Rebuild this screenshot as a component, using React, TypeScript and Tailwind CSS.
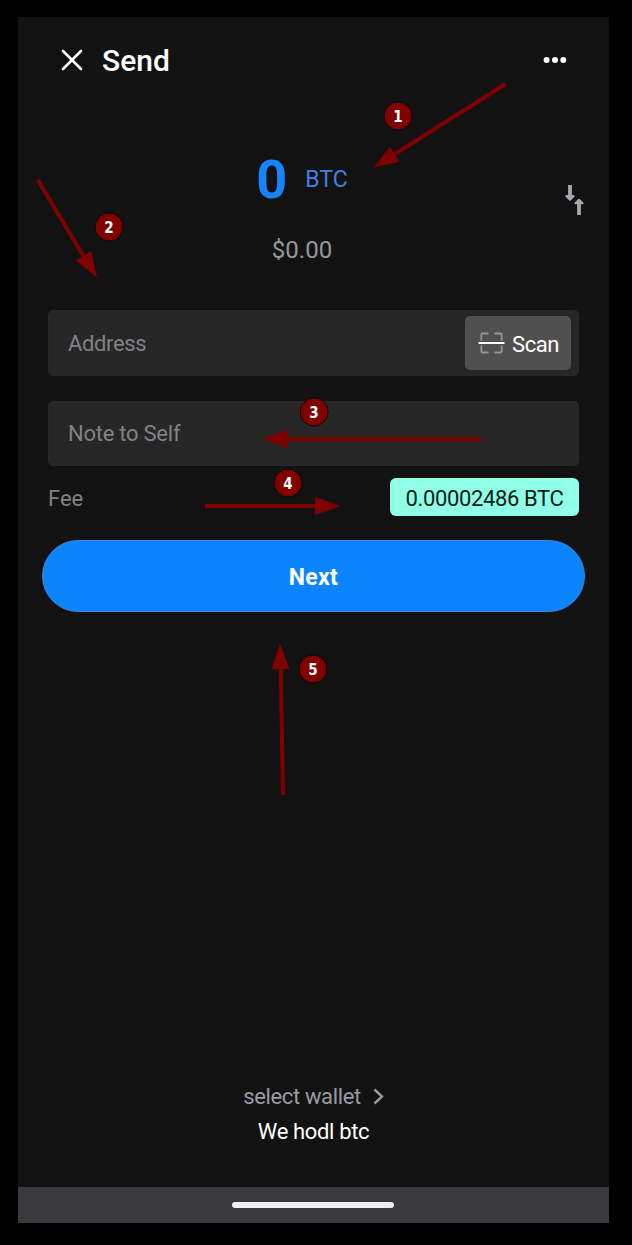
import React from "react";

type Step = {
  label: string;
  x: number;
  y: number;
  shaft: [number, number, number, number];
  head: string;
};

const steps: Step[] = [
  { label: "1", x: 398, y: 116, shaft: [505.5, 84, 393, 155.3], head: "373.5,167.7 390,147 399.2,161.7" },
  { label: "2", x: 109, y: 227, shaft: [37.5, 179.5, 84, 257], head: "97,277.5 75.8,260.5 91.2,251.2" },
  { label: "3", x: 314, y: 412, shaft: [481.3, 439, 287, 439], head: "262.5,439 288,430 288,448" },
  { label: "4", x: 288, y: 483, shaft: [205, 506, 316, 506], head: "341,506 315,497 315,515" },
  { label: "5", x: 313, y: 669, shaft: [283, 795, 280.8, 668], head: "280,643.5 271.5,669.2 289.5,669" },
];

function Annotations() {
  return (
    <div className="pointer-events-none absolute inset-0">
      <svg width="632" height="1245" viewBox="0 0 632 1245" className="block">
        {steps.map((s) => (
          <g key={s.label}>
            <line x1={s.shaft[0]} y1={s.shaft[1]} x2={s.shaft[2]} y2={s.shaft[3]} stroke="#800000" strokeWidth="4" />
            <polygon points={s.head} fill="#800000" />
            <circle cx={s.x} cy={s.y} r="14" fill="#800000" stroke="#080808" strokeWidth="1" />
          </g>
        ))}
      </svg>
      {steps.map((s) => (
        <span
          key={s.label}
          className="absolute flex h-7 w-7 items-center justify-center pt-[2px] font-['DejaVu_Sans_Condensed','DejaVu_Sans',sans-serif] text-[15px] leading-none font-bold text-white"
          style={{ left: s.x - 14, top: s.y - 14, fontStretch: "condensed" }}
        >
          {s.label}
        </span>
      ))}
    </div>
  );
}

function Header() {
  return (
    <header className="flex h-[88px] items-center pr-[42px] pl-[43px] text-white">
      <svg width="22" height="22" viewBox="0 0 22 22" fill="none" stroke="currentColor" strokeWidth="2.6" strokeLinecap="round" className="-mt-[3px]">
        <path d="M2 2 20 20M20 2 2 20" />
      </svg>
      <h1 className="ml-[19px] flex-1 text-[30px] leading-none font-medium">Send</h1>
      <svg width="24" height="8" viewBox="0 0 24 8" fill="currentColor" className="-mt-[3px]">
        <circle cx="3.6" cy="4" r="3" />
        <circle cx="12" cy="4" r="3" />
        <circle cx="20.3" cy="4" r="3" />
      </svg>
    </header>
  );
}

function Amount() {
  return (
    <section className="flex h-[205px] items-center">
      <div className="flex-1 pl-[21px]">
        <div className="flex h-[60px] items-center justify-center gap-[18px]">
          <span className="text-[54px] leading-none font-bold text-[#1683ff]">0</span>
          <span className="text-[23px] leading-none text-[#4080df]">BTC</span>
        </div>
        <div className="mt-[24px] flex h-8 items-center justify-center text-2xl leading-none text-[#98989d]">$0.00</div>
      </div>
      <svg width="22" height="32" viewBox="0 0 22 32" fill="none" stroke="#a6a8ad" className="-mt-[15px] mr-[22px]">
        <path d="M5 1v11M14 20v11" strokeWidth="3.8" />
        <path d="M1.5 12.2 5 15.6 8.5 12.2ZM10.5 19.2 14 15.8 17.5 19.2Z" fill="#a6a8ad" strokeWidth="2.2" strokeLinejoin="round" />
      </svg>
    </section>
  );
}

function ScanButton() {
  return (
    <button className="flex h-[54px] w-[106px] items-center rounded-[5px] bg-[#505050] pl-[13px] text-[22px] leading-none tracking-[-0.4px] text-white">
      <svg width="27" height="22" viewBox="0 0 27 22" fill="none">
        <path
          d="M10.5 1.5h-6a1.2 1.2 0 0 0-1.2 1.2v5.8M16.5 1.5h6a1.2 1.2 0 0 1 1.2 1.2v5.8M3.3 13.5v5.8a1.2 1.2 0 0 0 1.2 1.2h6M16.5 20.5h6a1.2 1.2 0 0 0 1.2-1.2v-5.8"
          stroke="#969696"
          strokeWidth="1.8"
        />
        <path d="M.5 11h26" stroke="#fff" strokeWidth="2" />
      </svg>
      <span className="mt-1 ml-[7px]">Scan</span>
    </button>
  );
}

export default function App() {
  return (
    <div className="relative flex h-[1245px] w-[632px] flex-col bg-black pt-[17px] pl-[18px] font-[Roboto,sans-serif]">
      <main className="flex h-[1206px] w-[591px] flex-col bg-[#121212]">
        <Header />
        <Amount />
        <section className="flex flex-col pr-[30px] pl-[30px] text-[22px] leading-none text-[#818184]">
          <div className="flex h-[66px] items-center justify-between rounded-[5px] border border-[#292929] bg-[#262626] pr-[7px] pl-[19px]">
            <span className="mt-0.5 tracking-[-0.35px]">Address</span>
            <ScanButton />
          </div>
          <div className="mt-[25px] flex h-[65px] items-center rounded-[5px] border border-[#292929] bg-[#262626] pl-[19px]">
            <span className="tracking-[-0.25px]">Note to Self</span>
          </div>
          <div className="mt-3 flex h-[38px] items-center justify-between">
            <span className="mt-[3px]">Fee</span>
            <span className="flex h-[38px] w-[189px] items-center justify-center rounded-[6px] bg-[#8fffe5] pt-[3px] tracking-[-0.38px] text-[#0a1a15]">
              0.00002486 BTC
            </span>
          </div>
        </section>
        <button className="mt-6 ml-6 flex h-[72px] w-[543px] items-center justify-center rounded-full border border-[#3b86e6] bg-[#0c84ff] pt-0.5 text-[23px] leading-none font-bold tracking-[0.3px] text-white">
          Next
        </button>
        <footer className="mt-auto flex flex-col">
          <div className="flex h-[35px] items-center justify-center gap-3 text-[22px] leading-none text-[#9a9aa0]">
            <span className="tracking-[-0.35px]">select wallet</span>
            <svg width="11" height="17" viewBox="0 0 11 17" fill="none" stroke="currentColor" strokeWidth="2.4" className="-mt-px">
              <path d="M1.5 1.5 9 8.5l-7.5 7" />
            </svg>
          </div>
          <div className="flex h-[35px] items-center justify-center text-[22px] leading-none tracking-[-0.35px] text-white">We hodl btc</div>
          <div className="mt-[38px] flex h-9 items-center justify-center bg-[#3a3a3c] pr-px">
            <div className="h-1.5 w-[162px] rounded-full bg-[#f0eef4]" />
          </div>
        </footer>
      </main>
      <Annotations />
    </div>
  );
}
